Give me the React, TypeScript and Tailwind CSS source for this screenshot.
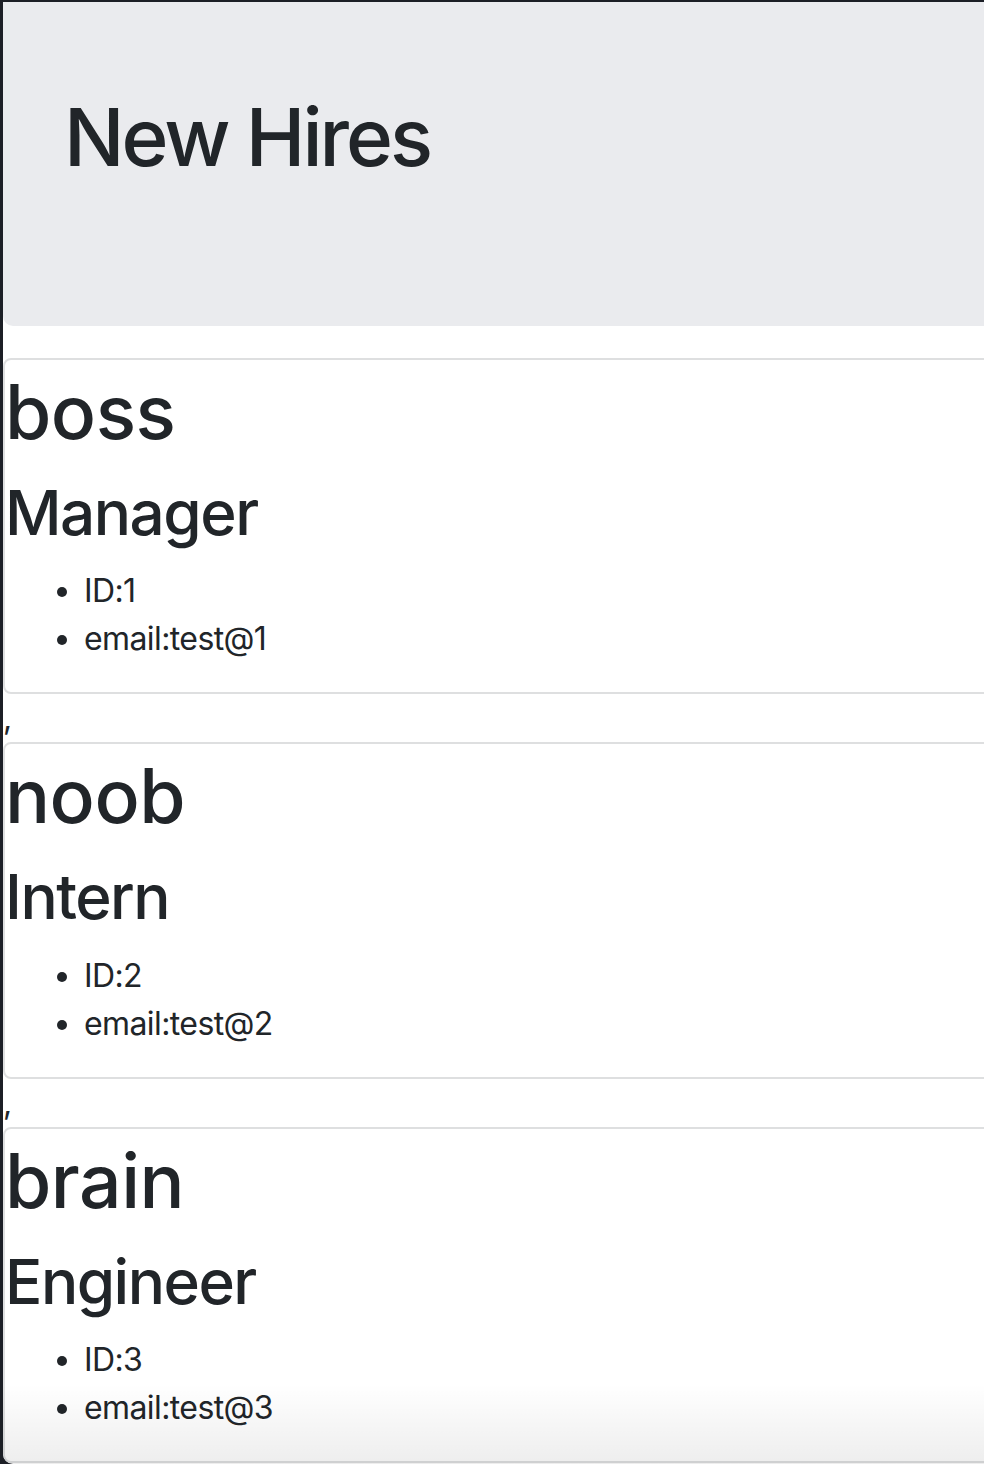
const hires = [
	{ name: 'boss', role: 'Manager', id: 1, email: 'test@1' },
	{ name: 'noob', role: 'Intern', id: 2, email: 'test@2' },
	{ name: 'brain', role: 'Engineer', id: 3, email: 'test@3' }
]

const HireCard = ({ name, role, id, email }: (typeof hires)[number]) => (
	<div className="w-[1000px] rounded-[8px] border-2 border-[#dedfe0] bg-white pt-[7px]">
		<h1 className="text-[75px] font-medium leading-[1.2] tracking-[-0.5px]">{name}</h1>
		<h2 className="mt-[19px] text-[62px] font-medium leading-[1.2] tracking-[-1.5px]">
			{role}
		</h2>
		<ul className="mb-[29px] mt-[17px] list-disc pl-[79px] text-[32px] leading-[48px] tracking-[-0.6px]">
			<li>ID:{id}</li>
			<li>email:{email}</li>
		</ul>
	</div>
)

export default function App() {
	return (
		<div className="h-[1464px] w-[984px] overflow-hidden bg-[#1c1f26] pl-[3px] pt-[2px] font-['Inter',sans-serif] text-[#212529]">
			<div className="relative h-full overflow-hidden rounded-bl-[10px] bg-white">
				<div className="h-[324px] w-[1000px] rounded-bl-[10px] bg-[#eaebee] pl-[61px] pt-[87px]">
					<h1 className="text-[80px] font-medium leading-[1.2] tracking-[-3px]">New Hires</h1>
				</div>
				<div className="mt-[32px]">
					{hires.map((h, i) => (
						<div key={h.id}>
							{i > 0 && <div className="h-[48px] text-[32px] leading-[48px]">,</div>}
							<HireCard {...h} />
						</div>
					))}
				</div>
				<div className="pointer-events-none absolute inset-x-0 bottom-0 h-[80px] bg-linear-to-b from-transparent to-black/[0.07]" />
			</div>
		</div>
	)
}
